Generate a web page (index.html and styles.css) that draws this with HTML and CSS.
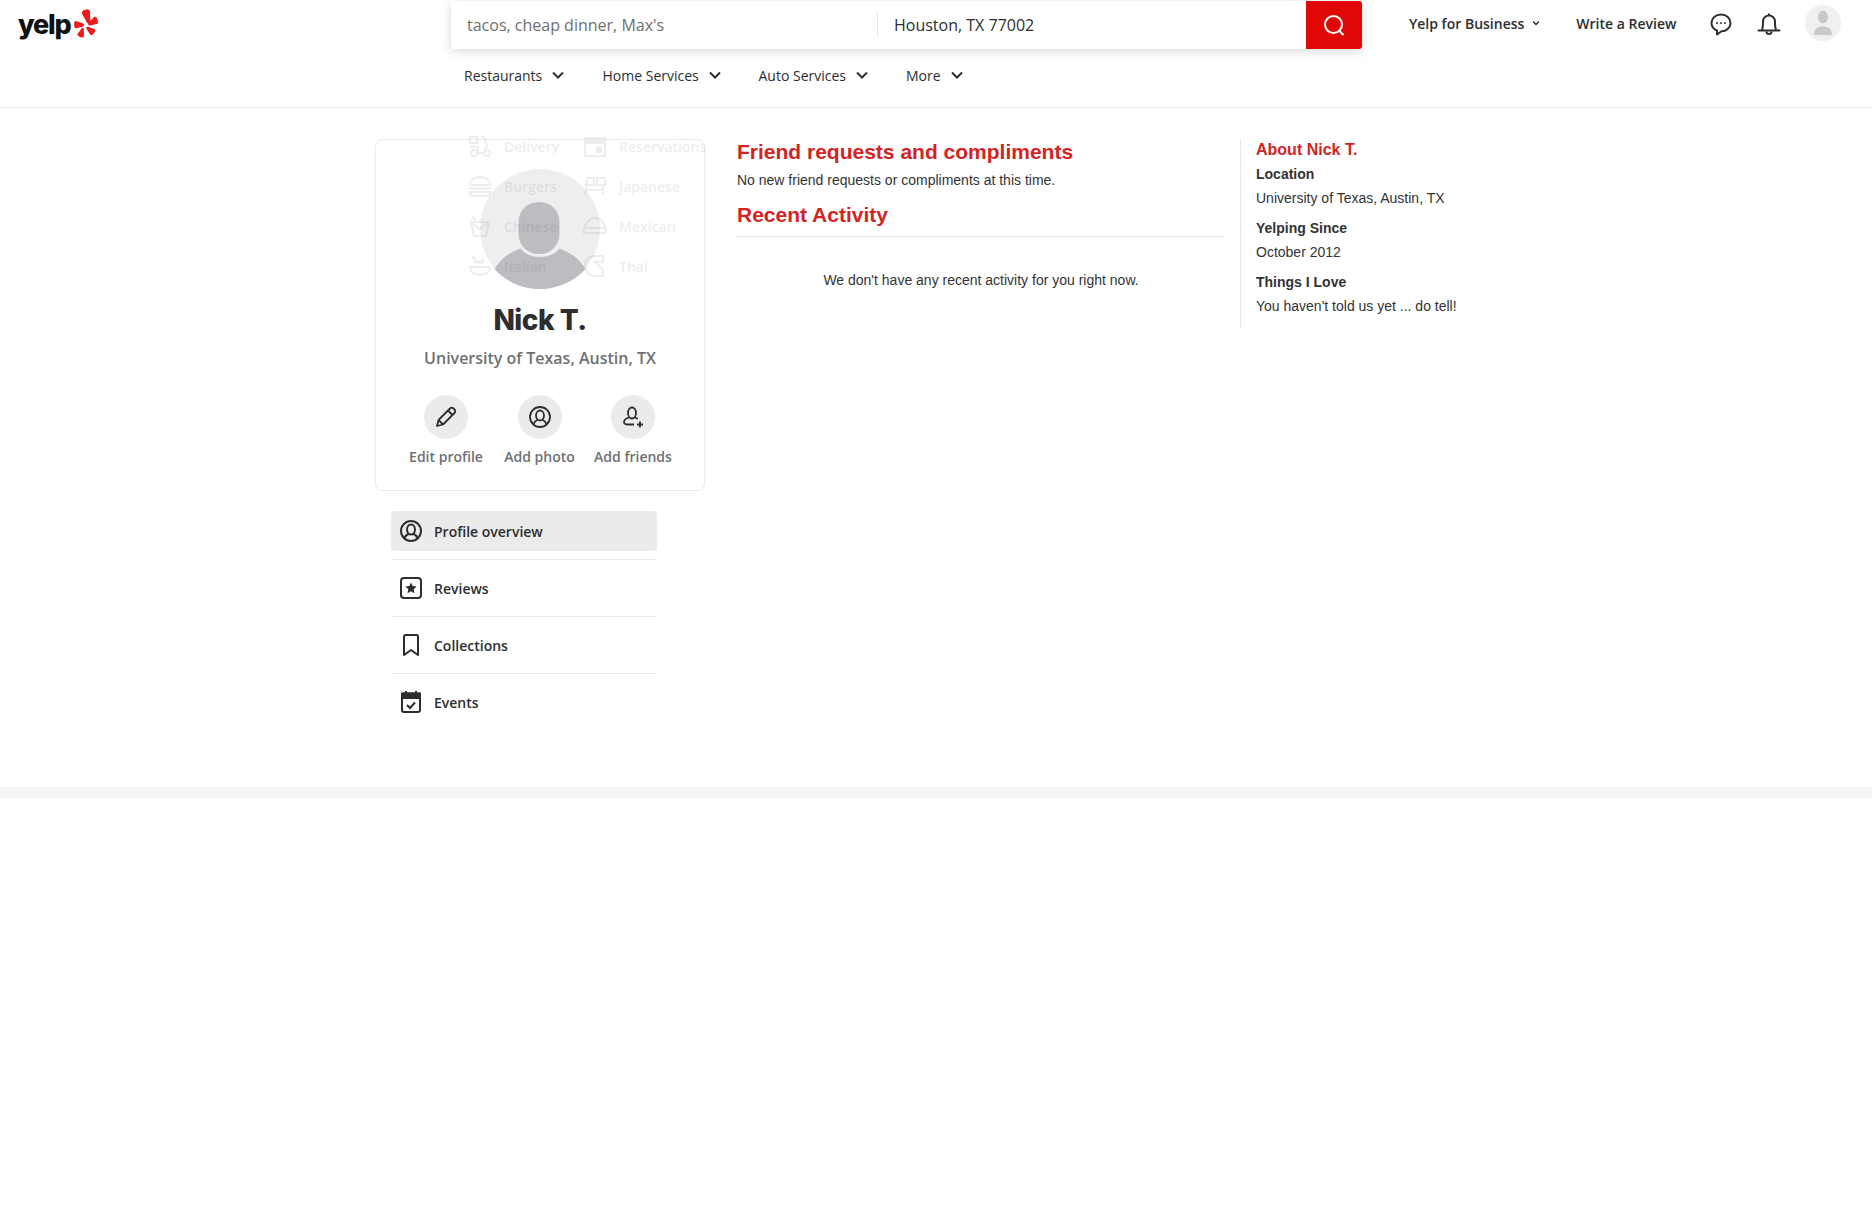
FILE: index.html
```html
<!DOCTYPE html>
<html lang="en">
<head>
  <meta charset="UTF-8" />
  <title>Nick T. - Yelp</title>
  <link rel="stylesheet" href="styles.css">
</head>
<body>

<header class="header">
  <div class="top-row">
    <a class="logo">
      <span class="logo-text">yelp</span>
      <svg class="burst" viewBox="0 0 28 32" width="25" height="29">
        <path d="M10.500 1.500c1-.9 4.500-1.500 6-1 1 .4 1.400 1 1.400 2l.5 11.500c0 2.300-2.800 3-4 1L9 5.200C8.400 3.800 9.200 2.500 10.500 1.500z" fill="#f01a1a"/>
        <path d="M2.800 13.400l6.800 2.200c2.200.7 2 3.600-.2 4.100l-6.600 1.500c-1.300.2-2-.3-2.300-1.400-.4-1.600-.5-3-.2-4.700.3-1.300 1.300-2.100 2.500-1.700z" fill="#f01a1a"/>
        <path d="M11 22.800l.1 6.900c0 1.300-1 2.200-2.200 2-1.600-.3-3-1-4.200-2-1-.8-1-1.800-.2-2.800l4.200-5.500c1.100-1.400 2.300-.5 2.300 1.400z" fill="#f01a1a"/>
        <path d="M16.500 20l6 2.100c1.300.4 1.600 1.500 1.200 2.600-.6 1.500-1.600 2.800-3 3.800-1.100.7-2.200.5-2.900-.6l-3.600-5.800c-1.200-2 .3-2.800 2.300-2.100z" fill="#f01a1a"/>
        <path d="M22.300 9c1.400-.9 2.500-.5 3.200.7.800 1.400 1.300 2.900 1.400 4.500.1 1.300-.6 2.200-1.900 2.400l-6.700 1.700c-2.200.5-3.400-2-1.900-3.400l5.900-5.900z" fill="#f01a1a"/>
      </svg>
    </a>

    <div class="search">
      <div class="search-find">tacos, cheap dinner, Max's</div>
      <div class="search-near">Houston, TX 77002</div>
      <button class="search-btn">
        <svg viewBox="0 0 24 24" width="24" height="24" fill="none" stroke="#fff" stroke-width="2">
          <circle cx="11.500" cy="11.500" r="8.500"/>
          <path d="M17.500 18l3.500 3.500" stroke-linecap="round"/>
        </svg>
      </button>
    </div>

    <nav class="user-nav">
      <span class="user-link biz">Yelp for Business
        <svg viewBox="0 0 10 10" width="10" height="10" fill="none" stroke="#2d2e2f" stroke-width="1.500"><path d="M2 3.500l3 3 3-3"/></svg>
      </span>
      <span class="user-link review">Write a Review</span>
      <svg class="chat-icon" viewBox="0 0 24 24" width="24" height="24" fill="none" stroke="#2d2e2f" stroke-width="2">
        <path d="M12 2.500c5.500 0 9.500 3.700 9.500 8.500s-4.500 8.500-9 8.300L8 22.500v-4C4.500 17 2.500 14.500 2.500 11c0-4.800 4-8.500 9.500-8.500z" stroke-linejoin="round"/>
        <circle cx="8" cy="11" r="1" fill="#2d2e2f" stroke="none"/>
        <circle cx="12" cy="11" r="1" fill="#2d2e2f" stroke="none"/>
        <circle cx="16" cy="11" r="1" fill="#2d2e2f" stroke="none"/>
      </svg>
      <svg class="bell-icon" viewBox="0 0 24 24" width="24" height="24" fill="none" stroke="#2d2e2f" stroke-width="2">
        <path d="M5 18c.6-2 1-3.500 1-6.500V9.500a6 6 0 0 1 12 0v2c0 3 .4 4.500 1 6.500" />
        <path d="M1.500 18.500h21" stroke-linecap="round"/>
        <path d="M9.500 19.500a2.500 2.500 0 0 0 5 0"/>
        <path d="M12 1.500v2"/>
      </svg>
      <span class="user-avatar">
        <svg viewBox="0 0 36 36" width="36" height="36">
          <ellipse cx="18" cy="12" rx="5" ry="6.500" fill="#c8c9ca"/>
          <path d="M9 30c0-6 3.500-8.500 9-8.500s9 2.500 9 8.500z" fill="#c8c9ca"/>
        </svg>
      </span>
    </nav>
  </div>

  <ul class="cat-nav">
    <li class="cat-item cat-restaurants">Restaurants <svg viewBox="0 0 14 14" width="14" height="14" fill="none" stroke="#2d2e2f" stroke-width="2"><path d="M2 4.500l5 5 5-5"/></svg></li>
    <li class="cat-item cat-home">Home Services <svg viewBox="0 0 14 14" width="14" height="14" fill="none" stroke="#2d2e2f" stroke-width="2"><path d="M2 4.500l5 5 5-5"/></svg></li>
    <li class="cat-item cat-auto">Auto Services <svg viewBox="0 0 14 14" width="14" height="14" fill="none" stroke="#2d2e2f" stroke-width="2"><path d="M2 4.500l5 5 5-5"/></svg></li>
    <li class="cat-item cat-more">More <svg viewBox="0 0 14 14" width="14" height="14" fill="none" stroke="#2d2e2f" stroke-width="2"><path d="M2 4.500l5 5 5-5"/></svg></li>
  </ul>
</header>

<main class="page">
  <aside class="sidebar">
    <section class="profile-card">
      <div class="profile-photo">
        <svg viewBox="0 0 120 120" width="120" height="120">
          <circle cx="60" cy="60" r="60" fill="#eeeeef"/>
          <rect x="38.500" y="33" width="41" height="52" rx="20" fill="#bdbcc1"/>
          <path d="M14.500 100C22 88 31 83 40.500 79.500 45 85.500 52 88 60 88s15-2.500 19.500-8.500C89 83 98 88 105.500 100 95 112 78 120 60 120S25 112 14.500 100z" fill="#bdbcc1"/>
        </svg>
      </div>
      <h1 class="profile-name">Nick T.</h1>
      <p class="profile-loc">University of Texas, Austin, TX</p>
      <div class="profile-actions">
        <div class="action action-edit">
          <span class="action-circle">
            <svg viewBox="0 0 24 24" width="24" height="24" fill="none" stroke="#2d2e2f" stroke-width="1.800" stroke-linejoin="round">
              <path d="M3 21l1.500-6L16 3.500c1-1 2.500-1 3.500 0l1 1c1 1 1 2.500 0 3.500L9 19.500z"/>
              <path d="M4.500 15L9 19.500M14 5.500l4.500 4.500"/>
            </svg>
          </span>
          <span class="action-label">Edit profile</span>
        </div>
        <div class="action action-photo">
          <span class="action-circle">
            <svg viewBox="0 0 24 24" width="24" height="24" fill="none" stroke="#2d2e2f" stroke-width="1.800">
              <circle cx="12" cy="12" r="10"/>
              <ellipse cx="12" cy="10.500" rx="4" ry="5"/>
              <path d="M5.500 19c1-2.500 3-3.800 4.500-4.500M18.500 19c-1-2.500-3-3.800-4.500-4.500"/>
            </svg>
          </span>
          <span class="action-label">Add photo</span>
        </div>
        <div class="action action-friends">
          <span class="action-circle">
            <svg viewBox="0 0 24 24" width="24" height="24" fill="none" stroke="#2d2e2f" stroke-width="1.800">
              <ellipse cx="11" cy="8" rx="4" ry="5.500"/>
              <path d="M8 12.500c-3 1-5 2.500-5 4.500 0 1.800 2 2.500 4 2.500h6M14 12.500c1 .4 2 .8 2.800 1.400"/>
              <path d="M19 16.500v6M16 19.500h6"/>
            </svg>
          </span>
          <span class="action-label">Add friends</span>
        </div>
      </div>
    </section>

    <ul class="side-menu">
      <li class="side-item active">
        <svg viewBox="0 0 24 24" width="24" height="24" fill="none" stroke="#2d2e2f" stroke-width="2">
          <circle cx="12" cy="12" r="10"/>
          <ellipse cx="12" cy="10.500" rx="4" ry="5"/>
          <path d="M5.500 19c1-2.500 3-3.800 4.500-4.500M18.500 19c-1-2.500-3-3.800-4.500-4.500"/>
        </svg>
        <span>Profile overview</span>
      </li>
      <li class="side-item">
        <svg viewBox="0 0 24 24" width="24" height="24" fill="none" stroke="#2d2e2f" stroke-width="2">
          <rect x="2" y="2" width="20" height="20" rx="3"/>
          <path d="M12 6.500l1.700 3.600 3.900.5-2.900 2.700.8 3.900-3.500-2-3.500 2 .8-3.900-2.900-2.700 3.900-.5z" fill="#2d2e2f" stroke="none"/>
        </svg>
        <span>Reviews</span>
      </li>
      <li class="side-item">
        <svg viewBox="0 0 24 24" width="24" height="24" fill="none" stroke="#2d2e2f" stroke-width="2">
          <path d="M5 22V3.500C5 2.700 5.700 2 6.500 2h11c.8 0 1.500.7 1.500 1.500V22l-7-5z" stroke-linejoin="round"/>
        </svg>
        <span>Collections</span>
      </li>
      <li class="side-item">
        <svg viewBox="0 0 24 24" width="24" height="24" fill="none" stroke="#2d2e2f" stroke-width="2">
          <rect x="3" y="3.500" width="18" height="18.500" rx="2"/>
          <path d="M3 3.500h18v4.500H3z" fill="#2d2e2f"/>
          <path d="M7 1v3M17 1v3" />
          <path d="M8 15l3 3 5-5.500"/>
        </svg>
        <span>Events</span>
      </li>
    </ul>
  </aside>

  <section class="activity">
    <h2 class="section-title">Friend requests and compliments</h2>
    <p class="section-note">No new friend requests or compliments at this time.</p>
    <h2 class="section-title recent">Recent Activity</h2>
    <p class="empty-note">We don't have any recent activity for you right now.</p>
  </section>

  <section class="about">
    <h3 class="about-title">About Nick T.</h3>
    <h4>Location</h4>
    <p>University of Texas, Austin, TX</p>
    <h4>Yelping Since</h4>
    <p>October 2012</p>
    <h4>Things I Love</h4>
    <p>You haven't told us yet ... do tell!</p>
  </section>
</main>

<div class="footer-band"></div>

<!-- dropdown caught half way through its fade out -->
<div class="fade-menu">
  <div class="fade-item"><svg viewBox="0 0 24 24" width="24" height="24" fill="none" stroke="#2d2e2f" stroke-width="2"><circle cx="6" cy="19" r="3"/><circle cx="19" cy="19" r="3"/><path d="M2 3h7v6H2zM9 19h7l3-8-3-8h-3M2 13h8v6"/></svg>Delivery</div>
  <div class="fade-item"><svg viewBox="0 0 24 24" width="24" height="24" fill="none" stroke="#2d2e2f" stroke-width="2"><rect x="2" y="4" width="20" height="18"/><path d="M2 8h20" stroke-width="4"/><rect x="14" y="14" width="4" height="4" fill="#2d2e2f"/></svg>Reservations</div>
  <div class="fade-item"><svg viewBox="0 0 24 24" width="24" height="24" fill="none" stroke="#2d2e2f" stroke-width="2"><path d="M2 11C2 6 6 3 12 3s10 3 10 8zM1 14.500h22M2 18h20v2c0 1.500-1 2-2 2H4c-1 0-2-.5-2-2z"/></svg>Burgers</div>
  <div class="fade-item"><svg viewBox="0 0 24 24" width="24" height="24" fill="none" stroke="#2d2e2f" stroke-width="2"><path d="M1 11h22M4 11L2 21M20 11v9M4 4h7v7H4zM14 4h8v7h-8zM2 16h18"/></svg>Japanese</div>
  <div class="fade-item"><svg viewBox="0 0 24 24" width="24" height="24" fill="none" stroke="#2d2e2f" stroke-width="2"><path d="M3 8h18l-3 14H6zM8 8L5 2M12 15l9-7M12 15L3 8"/></svg>Chinese</div>
  <div class="fade-item"><svg viewBox="0 0 24 24" width="24" height="24" fill="none" stroke="#2d2e2f" stroke-width="2"><path d="M1 19C1 10 6 4 12 4s11 6 11 15zM1 14h22"/></svg>Mexican</div>
  <div class="fade-item"><svg viewBox="0 0 24 24" width="24" height="24" fill="none" stroke="#2d2e2f" stroke-width="2"><path d="M5 2l3 7M16 5l-5 5M2 13h20c0 5-4 8-10 8S2 18 2 13zM6 9c3-2 8-2 11 0"/></svg>Italian</div>
  <div class="fade-item"><svg viewBox="0 0 24 24" width="24" height="24" fill="none" stroke="#2d2e2f" stroke-width="2"><path d="M2 10c0-5 5-8 10-8h8v6h-8l8 8v6H12C6 22 2 16 2 10z"/></svg>Thai</div>
</div>

</body>
</html>
```

FILE: styles.css
```css
* {
  box-sizing: border-box;
}

body {
  margin: 0;
  background: #fff;
  color: #2d2e2f;
  font-family: "Open Sans", Arial, sans-serif;
}

h1, h2, h3, h4, p, ul {
  margin: 0;
  padding: 0;
}

ul {
  list-style: none;
}

.header {
  height: 108px;
  border-bottom: 1px solid #ebebeb;
}

.top-row {
  display: flex;
  align-items: flex-start;
  padding-top: 1px;
}

.logo {
  display: flex;
  align-items: center;
  width: 451px;
  height: 48px;
  padding-left: 18px;
}

.logo-text {
  font-family: Inter, Arial, sans-serif;
  font-size: 27px;
  font-weight: 800;
  letter-spacing: -1.2px;
  color: #111;
  margin-top: -1px;
}

.burst {
  margin-left: 3px;
  margin-top: -4px;
}

.search {
  display: flex;
  align-items: center;
  width: 911px;
  height: 48px;
  border-radius: 3px;
  background: #fff;
  box-shadow: 0 2px 12px rgba(0,0,0,0.16);
  font-size: 16px;
}

.search-find {
  width: 426px;
  padding-left: 16px;
  color: #6e7072;
}

.search-near {
  flex: 1;
  height: 24px;
  line-height: 24px;
  padding-left: 16px;
  border-left: 1px solid #e6e6e6;
}

.search-btn {
  display: flex;
  align-items: center;
  justify-content: center;
  width: 56px;
  height: 48px;
  padding: 0;
  border: none;
  border-radius: 0 3px 3px 0;
  background: #e00707;
}

.user-nav {
  display: flex;
  align-items: center;
  height: 46px;
  font-size: 14px;
  font-weight: 600;
}

.user-link {
  display: flex;
  align-items: center;
  gap: 7px;
  margin-top: -2px;
}

.biz {
  margin-left: 47px;
}

.review {
  margin-left: 35px;
}

.chat-icon {
  margin-left: 33px;
}

.bell-icon {
  margin-left: 24px;
}

.user-avatar {
  width: 36px;
  height: 36px;
  margin-left: 24px;
  margin-top: -3px;
  border-radius: 50%;
  background: #f0f0f0;
}

.cat-nav {
  display: flex;
  padding: 14px 0 0 464px;
  font-size: 14px;
  font-weight: 400;
}

.cat-item {
  display: flex;
  align-items: center;
  gap: 9px;
  height: 24px;
}

.cat-restaurants {
  width: 138.500px;
}

.cat-home {
  width: 156px;
}

.cat-auto {
  width: 147.500px;
}

.page {
  display: flex;
  align-items: flex-start;
  height: 679px;
  padding: 31px 0 0 375px;
}

.sidebar {
  width: 330px;
}

.profile-card {
  height: 352px;
  padding-top: 29px;
  border: 1px solid #ebebeb;
  border-radius: 8px;
  text-align: center;
}

.profile-photo {
  height: 120px;
}

.profile-name {
  margin-top: 13px;
  font-family: Inter, Arial, sans-serif;
  font-size: 28px;
  font-weight: 800;
  line-height: 36px;
  letter-spacing: -0.5px;
}

.profile-loc {
  margin-top: 8px;
  font-size: 16px;
  font-weight: 600;
  line-height: 24px;
  color: #6e7072;
}

.profile-actions {
  display: flex;
  justify-content: center;
  margin-top: 25px;
  padding-right: 1px;
}

.action {
  display: flex;
  flex-direction: column;
  align-items: center;
  width: 93.500px;
}

.action-circle {
  display: flex;
  align-items: center;
  justify-content: center;
  width: 44px;
  height: 44px;
  border-radius: 50%;
  background: #ebebeb;
}

.action-label {
  margin-top: 8px;
  font-size: 14px;
  font-weight: 600;
  line-height: 20px;
  color: #6e7072;
  white-space: nowrap;
}

.side-menu {
  display: flex;
  flex-direction: column;
  gap: 17px;
  width: 266px;
  margin: 20px 0 0 16px;
}

.side-item {
  position: relative;
  display: flex;
  align-items: center;
  gap: 11px;
  height: 40px;
  padding-left: 8px;
  font-size: 14px;
  font-weight: 600;
  border-radius: 4px;
}

.side-item + .side-item::before {
  content: "";
  position: absolute;
  left: 0;
  right: 0;
  top: -9px;
  border-top: 1px solid #ebebeb;
}

.side-item.active {
  background: #ebebeb;
}

.activity {
  width: 488px;
  margin-left: 32px;
  color: #333;
  font-family: "Liberation Sans", Arial, sans-serif;
}

.section-title {
  font-size: 21px;
  font-weight: 700;
  line-height: 26px;
  color: #d32323;
}

.section-note {
  margin-top: 5px;
  font-size: 14px;
  line-height: 20px;
}

.recent {
  margin-top: 11px;
  padding-bottom: 7px;
  border-bottom: 1px solid #e6e6e6;
  line-height: 28px;
}

.empty-note {
  margin-top: 33px;
  font-size: 14px;
  line-height: 20px;
  text-align: center;
}

.about {
  width: 260px;
  height: 189px;
  margin-left: 15px;
  padding-left: 15px;
  border-left: 1px solid #e6e6e6;
  color: #333;
  font-family: "Liberation Sans", Arial, sans-serif;
  font-size: 14px;
  line-height: 20px;
}

.about-title {
  margin-top: 1px;
  font-size: 16px;
  font-weight: 700;
  line-height: 20px;
  color: #d32323;
}

.about h4 {
  margin-top: 4px;
  font-size: 14px;
  font-weight: 700;
}

.about p {
  margin-top: 4px;
  margin-bottom: 10px;
}

.footer-band {
  height: 11px;
  background: #f5f5f5;
}

.fade-menu {
  position: absolute;
  left: 444px;
  top: 108px;
  display: grid;
  grid-template-columns: 115px 165px;
  grid-auto-rows: 40px;
  width: 280px;
  height: 198px;
  padding: 18px 0 0 24px;
  font-size: 14px;
  font-weight: 600;
  opacity: 0.08;
  pointer-events: none;
  white-space: nowrap;
}

.fade-item {
  display: flex;
  align-items: center;
  gap: 12px;
  height: 40px;
}
```
